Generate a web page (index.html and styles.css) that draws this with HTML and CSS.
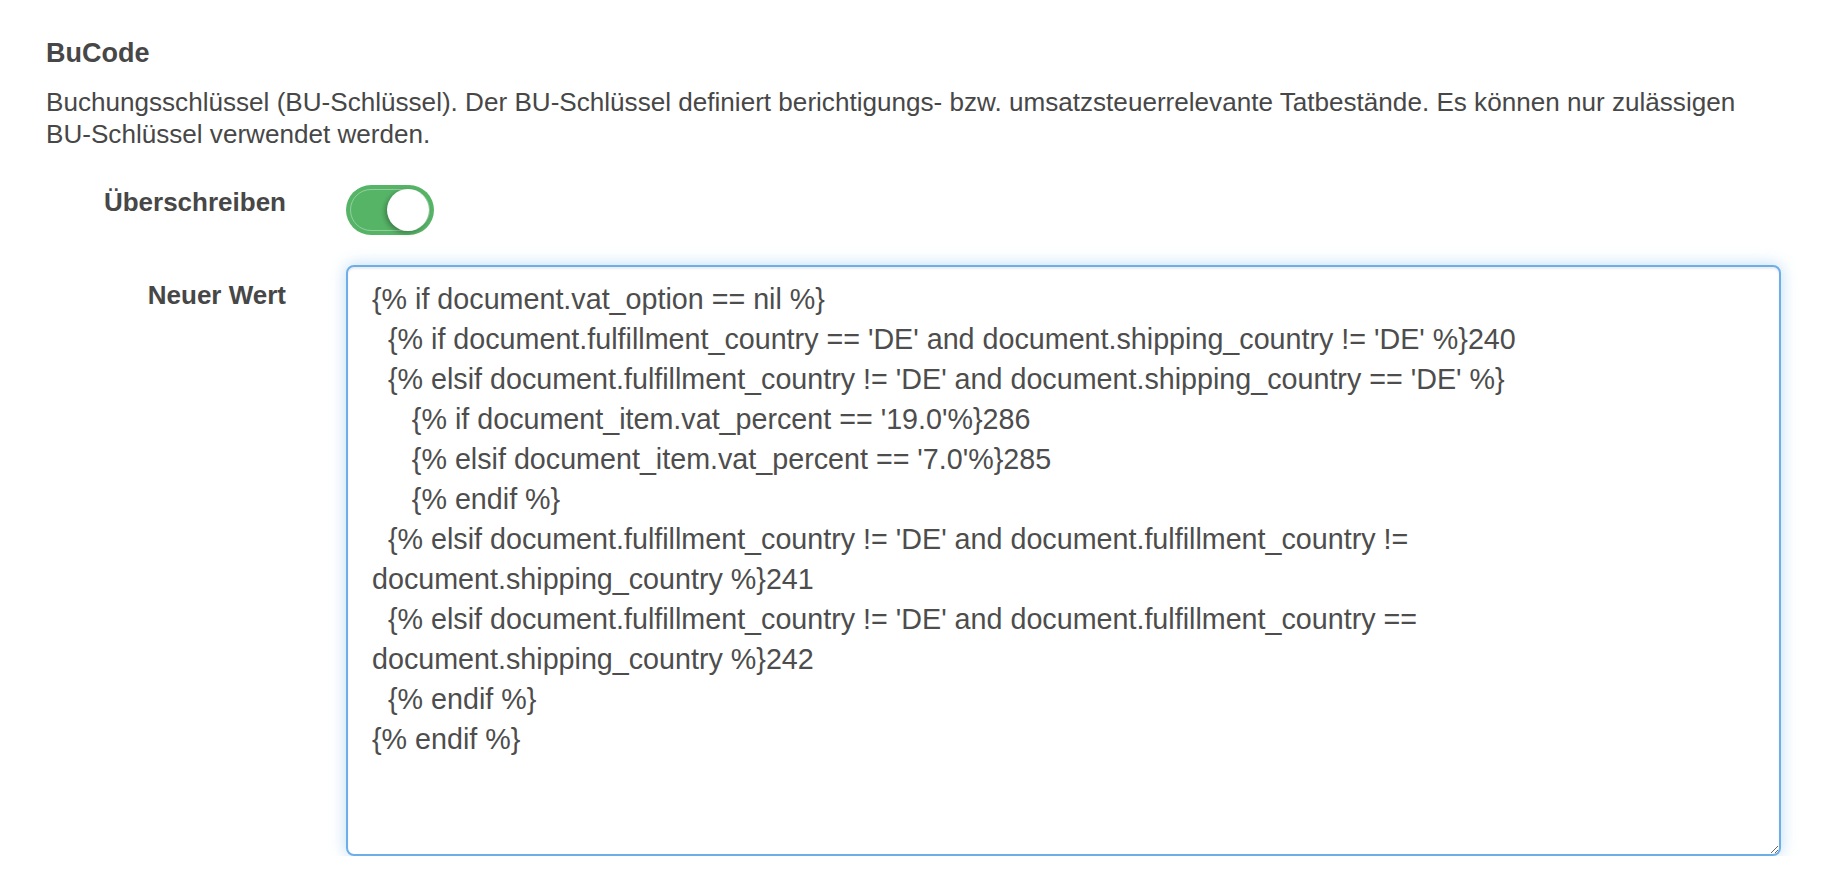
FILE: index.html
```html
<!DOCTYPE html>
<html lang="de">
<head>
<meta charset="utf-8">
<title>BuCode</title>
<link rel="stylesheet" href="styles.css">
</head>
<body>
<div class="section">
  <h4 class="title">BuCode</h4>
  <p class="help">Buchungsschlüssel (BU-Schlüssel). Der BU-Schlüssel definiert berichtigungs- bzw. umsatzsteuerrelevante Tatbestände. Es können nur zulässigen BU-Schlüssel verwendet werden.</p>
  <div class="form">
    <label class="label label-toggle">Überschreiben</label>
    <div class="control">
      <div class="switch"><span class="knob"></span></div>
    </div>
    <label class="label label-area">Neuer Wert</label>
    <div class="control">
      <textarea class="code" spellcheck="false">{% if document.vat_option == nil %}
  {% if document.fulfillment_country == 'DE' and document.shipping_country != 'DE' %}240
  {% elsif document.fulfillment_country != 'DE' and document.shipping_country == 'DE' %}
     {% if document_item.vat_percent == '19.0'%}286
     {% elsif document_item.vat_percent == '7.0'%}285
     {% endif %}
  {% elsif document.fulfillment_country != 'DE' and document.fulfillment_country != document.shipping_country %}241
  {% elsif document.fulfillment_country != 'DE' and document.fulfillment_country == document.shipping_country %}242
  {% endif %}
{% endif %}</textarea>
    </div>
  </div>
</div>
</body>
</html>
```

FILE: styles.css
```css
html, body {
  margin: 0;
  padding: 0;
  background: #ffffff;
}

body {
  font-family: "Liberation Sans", Arial, sans-serif;
  color: #474747;
}

.section {
  padding: 37px 49px 0 46px;
}

.title {
  margin: 0;
  font-size: 27px;
  line-height: 32px;
  font-weight: bold;
  color: #474747;
}

.help {
  margin: 18px 0 0 0;
  font-size: 26.1px;
  line-height: 31.5px;
  color: #474747;
}

.form {
  margin-top: 35px;
  display: grid;
  grid-template-columns: 240px 1fr;
  column-gap: 60px;
  row-gap: 30px;
}

.label {
  display: block;
  text-align: right;
  font-size: 26px;
  line-height: 32px;
  font-weight: bold;
  color: #474747;
}

.label-toggle {
  padding-top: 1px;
}

.label-area {
  padding-top: 14px;
}

.control {
  min-width: 0;
}

.switch {
  position: relative;
  width: 88px;
  height: 50px;
  border-radius: 25px;
  background: #56b467;
}

.switch::before {
  content: "";
  position: absolute;
  left: 4px;
  top: 4px;
  width: 80px;
  height: 42px;
  box-sizing: border-box;
  border-radius: 21px;
  border: 1px solid rgba(255, 255, 255, 0.35);
}

.knob {
  position: absolute;
  right: 5px;
  top: 4px;
  width: 42px;
  height: 42px;
  border-radius: 50%;
  background: #ffffff;
  box-shadow: -2px 2px 5px rgba(0, 0, 0, 0.3);
}

.code {
  display: block;
  box-sizing: border-box;
  width: 100%;
  height: 591px;
  margin: 0;
  padding: 12px 24px;
  border: 2px solid #6eaee8;
  border-radius: 8px;
  box-shadow: inset 0 2px 2px rgba(0, 0, 0, 0.075), 0 0 16px rgba(102, 175, 233, 0.45);
  outline: none;
  font-family: "Liberation Sans", Arial, sans-serif;
  font-size: 28.7px;
  line-height: 40px;
  color: #4d4d4d;
  background: #ffffff;
  white-space: pre-wrap;
  overflow: hidden;
  resize: vertical;
}
```
